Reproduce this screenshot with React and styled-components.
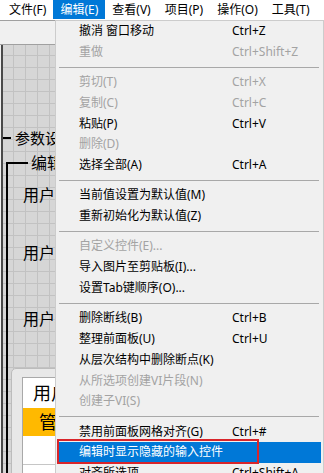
import React from "react";
import styled, { createGlobalStyle } from "styled-components";

const GlobalStyle = createGlobalStyle`
  html, body {
    margin: 0;
    padding: 0;
  }
  body {
    font-family: "Noto Sans", "Noto Sans CJK SC", sans-serif;
    font-size: 12px;
    overflow: hidden;
  }
`;

const Window = styled.div`
  position: relative;
  width: 324px;
  height: 473px;
  overflow: hidden;
  display: flex;
  flex-direction: column;
  background: #f0f0f0;
`;

const MenuBar = styled.div`
  flex: none;
  height: 20px;
  display: flex;
  padding-left: 2px;
  background: #ffffff;
`;

const MenuBarItem = styled.div`
  height: 19px;
  line-height: 19px;
  padding: 0 7px;
  white-space: nowrap;
  color: ${(p) => (p.$open ? "#ffffff" : "#000000")};
  background: ${(p) => (p.$open ? "#0078d7" : "transparent")};
`;

const Toolbar = styled.div`
  flex: none;
  height: 23px;
  border-top: 1px solid #a0a0a0;
  border-bottom: 1px solid #a0a0a0;
  background: #f0f0f0;
`;

const Canvas = styled.div`
  flex: 1;
  position: relative;
  overflow: hidden;
  margin-left: 1px;
  border-left: 2px solid #4a4a4a;
  background-color: #d6d6d6;
  background-image: linear-gradient(#c2c2c2 1px, transparent 1px),
    linear-gradient(90deg, #c2c2c2 1px, transparent 1px);
  background-size: 12px 12px;
  background-position: 10px 10px;
`;

const Group = styled.fieldset`
  box-sizing: border-box;
  min-width: 0;
  width: ${(p) => p.$width}px;
  min-height: ${(p) => p.$height}px;
  margin: ${(p) => p.$top}px 0 0 ${(p) => p.$left}px;
  padding: 0;
  border: 2px solid #000000;
`;

const GroupTitle = styled.legend`
  margin-left: ${(p) => p.$offset}px;
  padding: 0 ${(p) => p.$pad}px;
  font-size: ${(p) => p.$size}px;
  line-height: 20px;
  color: #000000;
  white-space: nowrap;
`;

const Label = styled.div`
  margin: ${(p) => p.$gap}px 0 0 15px;
  font-size: 16px;
  line-height: 20px;
  color: #000000;
  white-space: nowrap;
`;

const ListFrame = styled.div`
  width: 320px;
  margin: 39px 0 0 3px;
  padding: 8px 0 0 10px;
  border: 1px solid #bcbcbc;
  border-radius: 5px 5px 0 0;
  background: #e8e8e8;
`;

const ListTable = styled.div`
  border-left: 1px solid #a9a9a9;
  border-top: 1px solid #a9a9a9;
  background: #ffffff;
`;

const ListRow = styled.div`
  height: ${(p) => p.$h}px;
  line-height: ${(p) => p.$h}px;
  padding-left: ${(p) => p.$indent}px;
  font-size: 18px;
  white-space: nowrap;
  color: #000000;
  background: ${(p) => (p.$selected ? "#ffb900" : "#ffffff")};
  border-bottom: ${(p) => (p.$line ? "1px solid #c6c6c6" : "none")};
`;

const Dropdown = styled.div`
  position: absolute;
  top: 20px;
  left: 55px;
  width: 269px;
  box-sizing: border-box;
  padding: 0 2px 4px 2px;
  border: 1px solid #cccccc;
  background: #f0f0f0;
`;

const Item = styled.div`
  position: relative;
  height: 20.8px;
  line-height: 20.8px;
  display: grid;
  grid-template-columns: 153px auto;
  padding-left: 21px;
  white-space: nowrap;
  color: ${(p) => (p.$active ? "#ffffff" : p.$disabled ? "#a3a3a3" : "#000000")};
  background: ${(p) => (p.$active ? "#0078d7" : "transparent")};
`;

const Separator = styled.div`
  height: 9.4px;
  margin: 0 2px 0 1px;
  display: flex;
  align-items: center;

  &::before {
    content: "";
    flex: 1;
    height: 1px;
    background: #a8a8a8;
  }
`;

const Marker = styled.div`
  position: absolute;
  top: -3px;
  left: -1px;
  width: 202px;
  height: 25px;
  box-sizing: border-box;
  border: 2px solid #d9252a;
  pointer-events: none;
`;

const menuBar = ["文件(F)", "编辑(E)", "查看(V)", "项目(P)", "操作(O)", "工具(T)"];

const editMenu = [
  { label: "撤消 窗口移动", shortcut: "Ctrl+Z" },
  { label: "重做", shortcut: "Ctrl+Shift+Z", disabled: true },
  "sep",
  { label: "剪切(T)", shortcut: "Ctrl+X", disabled: true },
  { label: "复制(C)", shortcut: "Ctrl+C", disabled: true },
  { label: "粘贴(P)", shortcut: "Ctrl+V" },
  { label: "删除(D)", disabled: true },
  { label: "选择全部(A)", shortcut: "Ctrl+A" },
  "sep",
  { label: "当前值设置为默认值(M)" },
  { label: "重新初始化为默认值(Z)" },
  "sep",
  { label: "自定义控件(E)...", disabled: true },
  { label: "导入图片至剪贴板(I)..." },
  { label: "设置Tab键顺序(O)..." },
  "sep",
  { label: "删除断线(B)", shortcut: "Ctrl+B" },
  { label: "整理前面板(U)", shortcut: "Ctrl+U" },
  { label: "从层次结构中删除断点(K)" },
  { label: "从所选项创建VI片段(N)", disabled: true },
  { label: "创建子VI(S)", disabled: true },
  "sep",
  { label: "禁用前面板网格对齐(G)", shortcut: "Ctrl+#" },
  { label: "编辑时显示隐藏的输入控件", active: true },
  { label: "对齐所选项", shortcut: "Ctrl+Shift+A" },
];

const App = () => {
  return (
    <Window>
      <GlobalStyle />
      <MenuBar>
        {menuBar.map((m) => (
          <MenuBarItem key={m} $open={m === "编辑(E)"}>
            {m}
          </MenuBarItem>
        ))}
      </MenuBar>
      <Toolbar />
      <Canvas>
        <Group $top={83} $left={-23} $width={520} $height={600}>
          <GroupTitle $offset={29} $pad={4} $size={15}>
            参数设置
          </GroupTitle>
          <Group $top={5} $left={24} $width={480} $height={500}>
            <GroupTitle $offset={20} $pad={3} $size={16}>
              编辑参数
            </GroupTitle>
            <Label $gap={12}>用户名</Label>
            <Label $gap={38}>用户密码</Label>
            <Label $gap={46}>用户权限</Label>
            <ListFrame>
              <ListTable>
                <ListRow $h={30} $indent={10}>用户列表</ListRow>
                <ListRow $h={28} $indent={16} $selected>
                  管理员
                </ListRow>
                <ListRow $h={28} $line />
                <ListRow $h={28} />
              </ListTable>
            </ListFrame>
          </Group>
        </Group>
      </Canvas>

      <Dropdown>
        {editMenu.map((it, i) =>
          it === "sep" ? (
            <Separator key={i} />
          ) : (
            <Item key={i} $disabled={it.disabled} $active={it.active}>
              <span>{it.label}</span>
              <span>{it.shortcut}</span>
              {it.active && <Marker />}
            </Item>
          )
        )}
      </Dropdown>
    </Window>
  );
};

export default App;
